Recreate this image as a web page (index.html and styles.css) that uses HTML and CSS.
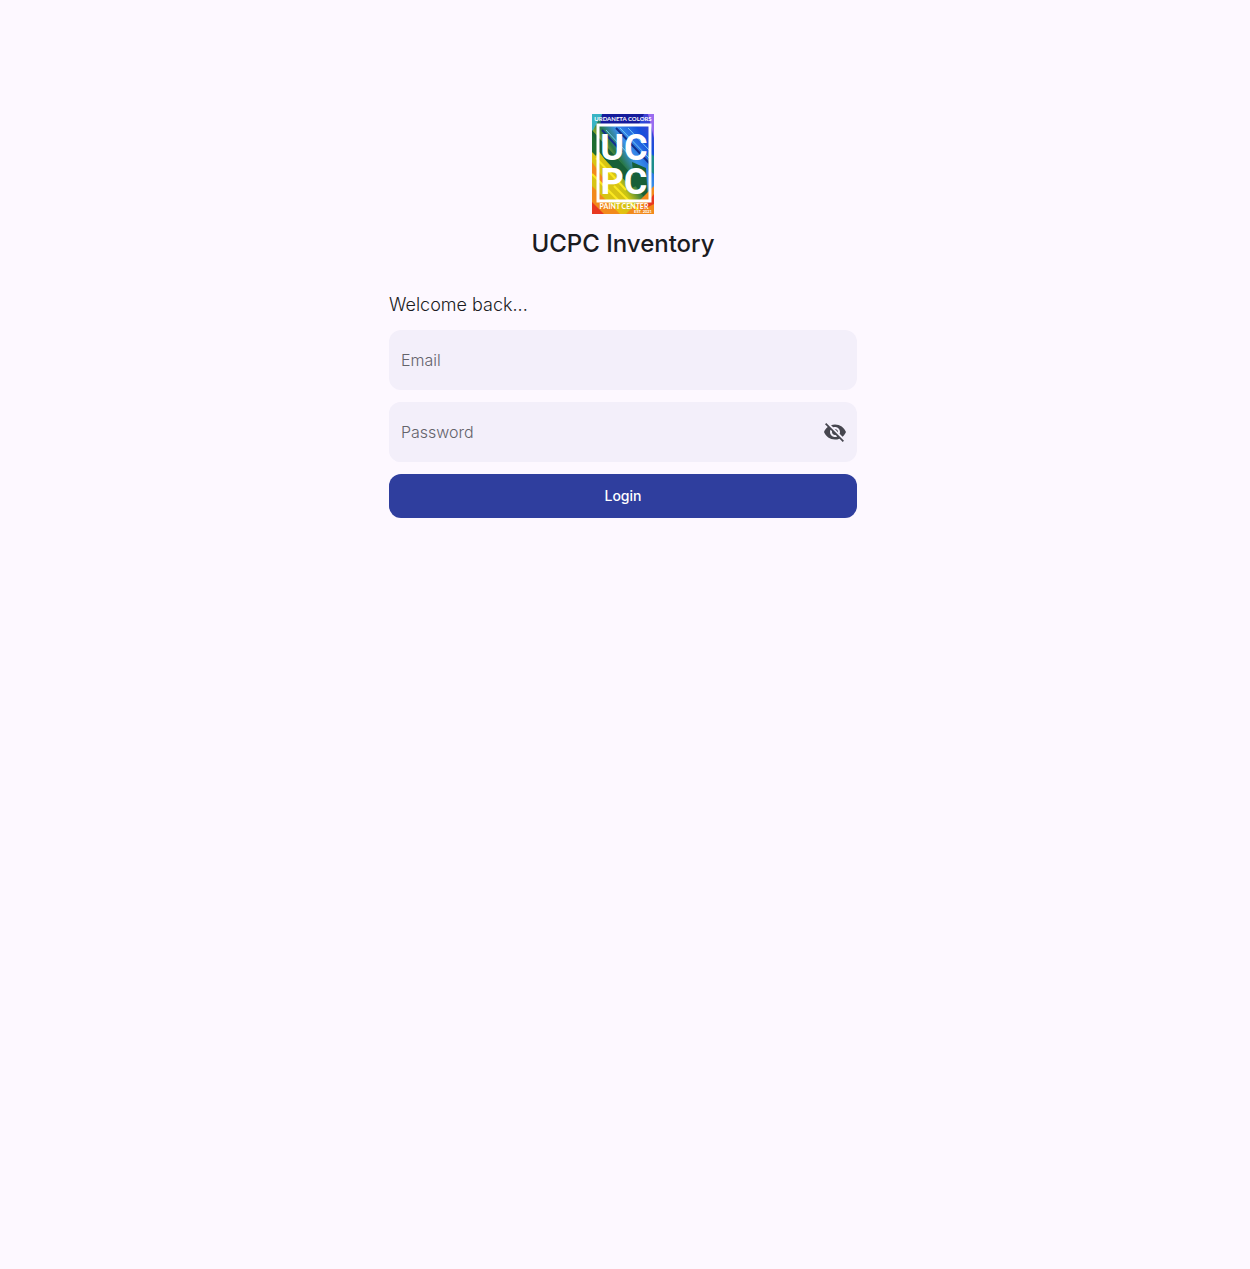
FILE: index.html
```html
<!DOCTYPE html>
<html lang="en">
<head>
<meta charset="utf-8">
<meta name="viewport" content="width=device-width, initial-scale=1">
<title>UCPC Inventory</title>
<link rel="stylesheet" href="styles.css">
</head>
<body>
<main class="login">
  <svg class="logo" viewBox="0 0 62 100" role="img" aria-label="Urdaneta Colors Paint Center">
    <defs>
      <linearGradient id="paint" x1="1" y1="0" x2="0" y2="1">
        <stop offset="0" stop-color="#5a3bd0"/>
        <stop offset=".2" stop-color="#1450dc"/>
        <stop offset=".38" stop-color="#3c92e8"/>
        <stop offset=".5" stop-color="#287848"/>
        <stop offset=".62" stop-color="#c8c414"/>
        <stop offset=".8" stop-color="#f0c010"/>
        <stop offset="1" stop-color="#f08020"/>
      </linearGradient>
    </defs>
    <path fill="url(#paint)" d="M0 0h62v100H0z"/>
    <path fill="#151b9c" d="M10 0h42l-6 12H8z"/>
    <path fill="#39b4c4" d="M0 0h10L0 18z"/>
    <path fill="#9a6cf0" d="M56 0h6v24z"/>
    <path fill="#176038" d="M0 16l48 54-8 4L0 32zM40 48l14 6 2 34-14-18z"/>
    <path fill="#d8c414" d="M0 28l16 22 12 16-4 34H0z"/>
    <path fill="#1d6c30" d="M0 20l8 14-4 8-4-4z"/>
    <path fill="#f28a1c" d="M0 72l28 28H0zM62 58v14L34 100h28zM0 48l14 20-6 2-8-10z"/>
    <path fill="#e83820" d="M0 88l12 12H0zM62 80v10l-12 6z"/>
    <path fill="#1c8c8c" d="M62 42v18l-6-4V38z"/>
    <path fill="none" stroke="#72c8f4" stroke-width="1" d="M28 14l30 31M36 14l22 23M14 16l28 30"/>
    <path fill="none" stroke="#10308c" stroke-width="2" d="M24 14l34 36M10 16l20 22"/>
    <path fill="none" stroke="#fae820" stroke-width="2" d="M4 44l30 32M0 60l28 28M22 72l24 24"/>
    <path fill="none" stroke="#fff" stroke-width="3" d="M6 11h52v76H6z"/>
    <g class="logo-text">
      <text class="logo-small" x="31" y="7">URDANETA COLORS</text>
      <text class="logo-big" x="32" y="46">UC</text>
      <text class="logo-big" x="32" y="80">PC</text>
      <text class="logo-name" x="32" y="95">PAINT CENTER</text>
      <text class="logo-year" x="51" y="99">EST. 2021</text>
    </g>
  </svg>
  <h1 class="title">UCPC Inventory</h1>
  <form class="form">
    <p class="welcome">Welcome back...</p>
    <input class="field" type="email" placeholder="Email" aria-label="Email">
    <div class="password">
      <input class="field" type="password" placeholder="Password" aria-label="Password">
      <button class="toggle" type="button" aria-label="Show password">
        <svg viewBox="0 0 24 24" width="24" height="24" fill="currentColor"><path d="M12 7c2.760 0 5 2.240 5 5 0 .65-.13 1.260-.36 1.830l2.920 2.920c1.510-1.260 2.700-2.890 3.430-4.750-1.730-4.390-6-7.500-11-7.500-1.400 0-2.740.25-3.980.7l2.160 2.160C10.740 7.130 11.350 7 12 7zM2 4.270l2.280 2.280.46.46C3.080 8.300 1.780 10.020 1 12c1.730 4.390 6 7.500 11 7.500 1.550 0 3.030-.3 4.380-.84l.42.42L19.730 22 21 20.730 3.270 3 2 4.270zM7.530 9.800l1.550 1.550c-.05.21-.08.43-.08.65 0 1.660 1.340 3 3 3 .22 0 .44-.03.65-.08l1.550 1.550c-.67.33-1.410.53-2.200.53-2.760 0-5-2.240-5-5 0-.79.2-1.530.53-2.200zm4.310-.78l3.150 3.150.02-.16c0-1.660-1.340-3-3-3l-.17.01z"/></svg>
      </button>
    </div>
    <button class="submit" type="submit">Login</button>
  </form>
</main>
</body>
</html>
```
FILE: styles.css
```css
* { box-sizing: border-box; }
body {
  margin: 0;
  padding: 114px 4px 0 0;
  background: #fdf8ff;
  color: #1b1b21;
  font-family: Inter, sans-serif;
}
.login {
  display: flex;
  flex-direction: column;
  align-items: center;
  max-width: 468px;
  margin: 0 auto;
}
.logo { display: block; width: 62px; height: 100px; }
.logo-text { fill: #fff; text-anchor: middle; font-family: Lato, sans-serif; font-weight: 700; }
.logo-big { font-family: Roboto, sans-serif; font-size: 36px; }
.logo-small { font-size: 6px; }
.logo-name { font-size: 7px; }
.logo-year { font-size: 4px; }
.title { margin: 14px 0 0; font-size: 24px; line-height: 32px; font-weight: 500; }
.form { display: flex; flex-direction: column; gap: 12px; width: 100%; margin-top: 32px; }
.welcome { margin: 0; font-size: 18px; line-height: 26px; font-weight: 300; }
.field {
  width: 100%;
  height: 60px;
  padding: 0 12px;
  border: 0;
  border-radius: 12px;
  background: #f3effa;
  color: #1b1b21;
  font: 300 16px/24px Inter, sans-serif;
}
.field::placeholder { color: #64636b; opacity: 1; }
.password { display: flex; align-items: center; background: #f3effa; border-radius: 12px; }
.password .field { flex: 1; min-width: 0; }
.toggle { display: flex; padding: 10px; border: 0; background: none; color: #46464f; }
.submit {
  height: 44px;
  border: 0;
  border-radius: 12px;
  background: #2f3e9e;
  color: #fff;
  font: 500 14px/20px Inter, sans-serif;
}
```
